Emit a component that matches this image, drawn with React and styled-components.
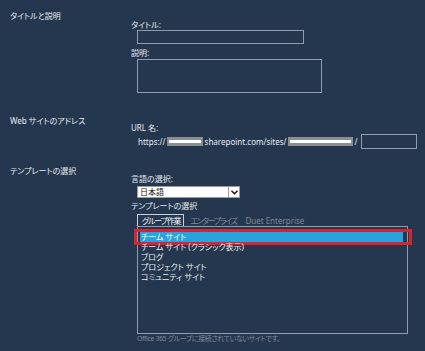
import React from "react";
import styled, { createGlobalStyle } from "styled-components";

const GlobalStyle = createGlobalStyle`
  html, body {
    margin: 0;
    padding: 0;
    background: #25374f;
  }
  body {
    font-family: "Noto Sans", "Noto Sans CJK JP", sans-serif;
    font-size: 8px;
    color: #e8ebef;
    font-feature-settings: "palt";
  }
`;

const Page = styled.div`
  width: 425px;
  height: 351px;
  overflow: hidden;
  background: #25374f;
  box-sizing: border-box;
  padding-top: 11px;
`;

const Section = styled.section`
  display: grid;
  grid-template-columns: 131px 1fr;
  margin-top: ${(p) => p.$gap || 0}px;
`;

const SectionLabel = styled.div`
  padding-left: 10px;
  line-height: 10px;
  white-space: nowrap;
`;

const Fields = styled.div`
  display: flex;
  flex-direction: column;
  align-items: flex-start;
  padding-top: ${(p) => p.$offset || 0}px;
`;

const FieldLabel = styled.div`
  line-height: 10px;
  margin-top: ${(p) => p.$gap || 0}px;
  white-space: nowrap;
`;

const TextBox = styled.div`
  margin-left: 6px;
  margin-top: ${(p) => p.$gap || 0}px;
  width: ${(p) => p.$w}px;
  height: ${(p) => p.$h}px;
  border: 1px solid #8f9cae;
  box-sizing: border-box;
`;

const UrlRow = styled.div`
  display: flex;
  align-items: center;
  height: 15px;
  margin-top: 1px;
  margin-left: 7px;
  white-space: nowrap;
`;

const Redacted = styled.span`
  display: inline-flex;
  align-items: center;
  width: ${(p) => p.$w}px;
  height: 9px;
  padding: 0 2px;
  margin: 0 2px 0 1px;
  box-sizing: border-box;
  background: #8a8d92;

  &::before {
    content: "";
    flex: 1;
    height: 3px;
    background: #ffffff;
  }
`;

const Slash = styled.span`
  margin-right: 3px;
`;

const UrlInput = styled(TextBox)`
  margin-left: 0;
  width: 56px;
  height: 15px;
`;

const Select = styled.div`
  margin-left: 6px;
  margin-top: 2px;
  width: 103px;
  height: 12px;
  box-sizing: border-box;
  background: #ffffff;
  border: 1px solid #9a9a9a;
  display: flex;
  align-items: center;
  color: #111;
  padding-left: 2px;
  line-height: 10px;
`;

const SelectValue = styled.span`
  flex: 1;
`;

const SelectArrow = styled.span`
  width: 10px;
  height: 10px;
  border-left: 1px solid #9a9a9a;
  display: flex;
  align-items: center;
  justify-content: center;
`;

const Tabs = styled.div`
  display: flex;
  margin-left: 6px;
  margin-top: 3px;
  height: 12px;
`;

const Tab = styled.div`
  letter-spacing: ${(p) => p.$tight || 0}px;
  line-height: 11px;
  padding: 0 3px 0 4px;
  margin-right: ${(p) => p.$after || 0}px;
  white-space: nowrap;
  box-sizing: border-box;
  color: ${(p) => (p.$active ? "#f2f4f7" : "#7e8896")};
  border: 1px solid ${(p) => (p.$active ? "#c9d0da" : "transparent")};
  border-bottom: none;
`;

const ListBox = styled.div`
  margin-left: 6px;
  width: 271px;
  height: 108px;
  box-sizing: border-box;
  border: 1px solid #8f9cae;
  padding: 5px 4px 0 2px;
`;

const ListItem = styled.div`
  position: relative;
  line-height: 10px;
  height: 10px;
  padding-left: 1px;
  white-space: nowrap;
  background: ${(p) => (p.$selected ? "#2aa2dc" : "transparent")};
  color: ${(p) => (p.$selected ? "#ffffff" : "#eef0f3")};

  ${(p) =>
    p.$selected &&
    `
    &::after {
      content: "";
      position: absolute;
      left: -6px;
      right: -9px;
      top: -3px;
      bottom: -3px;
      border: 3px solid #d8222d;
      box-sizing: border-box;
    }
  `}
`;

const Note = styled.div`
  margin-left: 6px;
  font-size: 7px;
  letter-spacing: -0.4px;
  line-height: 10px;
  color: #7e8896;
  white-space: nowrap;
`;

const Chevron = () => (
  <svg width="7" height="5" viewBox="0 0 7 5">
    <path d="M0.5 0.8 L3.5 3.8 L6.5 0.8" fill="none" stroke="#111" strokeWidth="1.4" />
  </svg>
);

const templates = [
  "チーム サイト",
  "チーム サイト (クラシック表示)",
  "ブログ",
  "プロジェクト サイト",
  "コミュニティ サイト",
];

export default function App() {
  return (
    <Page>
      <GlobalStyle />
      <Section>
        <SectionLabel>タイトルと説明</SectionLabel>
        <Fields $offset={9}>
          <FieldLabel>タイトル:</FieldLabel>
          <TextBox $w={167} $h={14} />
          <FieldLabel $gap={4}>説明:</FieldLabel>
          <TextBox $w={185} $h={34} $gap={1} />
        </Fields>
      </Section>

      <Section $gap={23}>
        <SectionLabel>Web サイトのアドレス</SectionLabel>
        <Fields $offset={7}>
          <FieldLabel>URL 名:</FieldLabel>
          <UrlRow>
            https://
            <Redacted $w={36} />
            sharepoint.com/sites/
            <Redacted $w={65} />
            <Slash>/</Slash>
            <UrlInput />
          </UrlRow>
        </Fields>
      </Section>

      <Section $gap={17}>
        <SectionLabel>テンプレートの選択</SectionLabel>
        <Fields $offset={8}>
          <FieldLabel>言語の選択:</FieldLabel>
          <Select>
            <SelectValue>日本語</SelectValue>
            <SelectArrow>
              <Chevron />
            </SelectArrow>
          </Select>
          <FieldLabel $gap={3}>テンプレートの選択</FieldLabel>
          <Tabs>
            <Tab $active $tight={-1.2} $after={1}>グループ作業</Tab>
            <Tab $tight={-1.45}>エンタープライズ</Tab>
            <Tab>Duet Enterprise</Tab>
          </Tabs>
          <ListBox>
            {templates.map((t, i) => (
              <ListItem key={t} $selected={i === 0}>
                {t}
              </ListItem>
            ))}
          </ListBox>
          <Note>Office 365 グループに接続されていないサイトです。</Note>
        </Fields>
      </Section>
    </Page>
  );
}
